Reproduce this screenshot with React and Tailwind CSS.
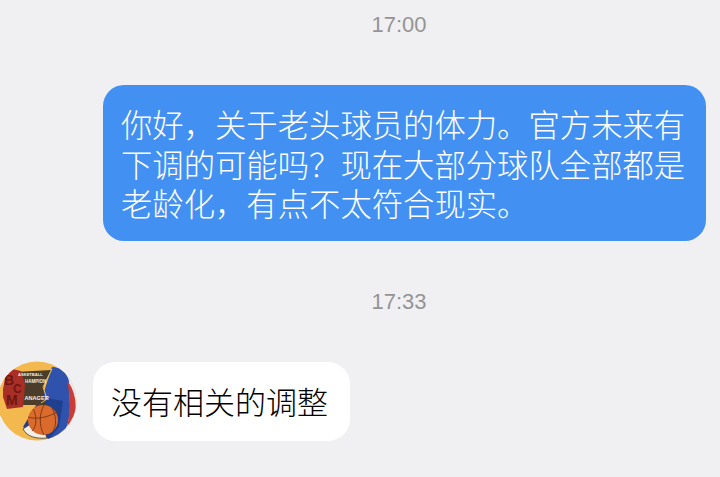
const cjk = { fontFamily: '"Noto Sans CJK SC", sans-serif' };
const label = "Liberation Sans, sans-serif";

// badge drawn in a 80x80 box
const Avatar = () => (
  <svg viewBox="0 0 80 80" className="w-[80px] h-[80px] shrink-0 -ml-[3px]">
    <defs>
      <clipPath id="round">
        <circle cx="40" cy="40" r="39.5" />
      </clipPath>
    </defs>
    <g clipPath="url(#round)">
      <rect width="80" height="80" fill="#f3b94f" />
      <path d="M60 0 L80 8 L80 80 L62 80 L58 40 Z" fill="#eceaf0" />
      <path d="M55 6 C64 6 70 12 72 20 L73 44 C73 58 70 70 62 80 L50 80 L62 50 L44 40 Z" fill="#2f52ad" />
      <path d="M70 20 C78 28 80 44 78 54 C76 62 72 68 69 71 C73 56 74 36 70 20 Z" fill="#cb3c36" />
      <path d="M44 36 L66 40 L62 66 L52 78 L36 72 L26 66 Z" fill="#1f3f8f" />
      <path d="M18 11 L54 9 L47 24 L47 38 L50 44 L22 44 L22 30 L14 30 Z" fill="#4b3d2a" />
      <path d="M55 8 L46 26 L50 38 L44 42" fill="none" stroke="#e8c15a" strokeWidth="1" />
      <path d="M8 18 L15 8 L24 10 L28 24 L27 36 L26 46 L10 48 L6 36 L6 28 Z" fill="#a92f26" />
      <path d="M26 68 C30 76 40 78 50 77 L48 72 L32 64 Z" fill="#f3efe6" stroke="#3a3a3a" strokeWidth="0.8" />
      <circle cx="46" cy="59" r="15" fill="#db6b2d" />
      <path d="M31 56 C39 59 52 56 60 51 M47 44 C42 53 42 65 47 74 M36 48 C40 54 40 66 35 70 M55 47 C59 54 60 64 56 70" fill="none" stroke="#7a3414" strokeWidth="0.9" />
      <text x="21" y="14.5" fontSize="4.1" fontWeight="700" fill="#f4efe0" fontFamily={label}>ASKETBALL</text>
      <text x="28" y="21.5" fontSize="4.5" fontWeight="700" fill="#f4efe0" fontFamily={label}>HAMPION</text>
      <text x="27.5" y="39" fontSize="5.6" fontWeight="700" fill="#f4efe0" fontFamily={label}>ANAGER</text>
      <text x="7" y="24" fontSize="14" fontWeight="700" fill="#6e1712" fontFamily={label}>B</text>
      <text x="16" y="32" fontSize="12" fontWeight="700" fill="#6e1712" fontFamily={label}>C</text>
      <text x="9" y="44" fontSize="14" fontWeight="700" fill="#6e1712" fontFamily={label}>M</text>
    </g>
  </svg>
);

const Time = ({ children }) => (
  <div
    className="text-center text-[22px] leading-[28px] text-[#949497]"
    style={{ fontFamily: '"Liberation Sans", sans-serif' }}
  >
    {children}
  </div>
);

export default function App() {
  return (
    <div className="w-[720px] h-[477px] overflow-hidden bg-[#f0f0f2] pt-[11px] flex flex-col" style={cjk}>
      <div className="pl-[78px]">
        <Time>17:00</Time>
      </div>
      <div className="mt-[46px] ml-[103px] w-[603px] h-[156px] rounded-[21px] bg-[#4291f2] text-white font-light text-[31.35px] leading-[39.5px] pl-[18px] pt-[19px] whitespace-nowrap">
        <div>你好，关于老头球员的体力。官方未来有</div>
        <div>下调的可能吗？现在大部分球队全部都是</div>
        <div>老龄化，有点不太符合现实。</div>
      </div>
      <div className="mt-[47px] pl-[78px]">
        <Time>17:33</Time>
      </div>
      <div className="mt-[45px] flex items-center gap-[16px]">
        <Avatar />
        <div className="w-[257px] h-[79px] rounded-[22px] bg-white text-black font-light text-[31px] flex items-center pl-[18px] whitespace-nowrap">
          没有相关的调整
        </div>
      </div>
    </div>
  );
}
